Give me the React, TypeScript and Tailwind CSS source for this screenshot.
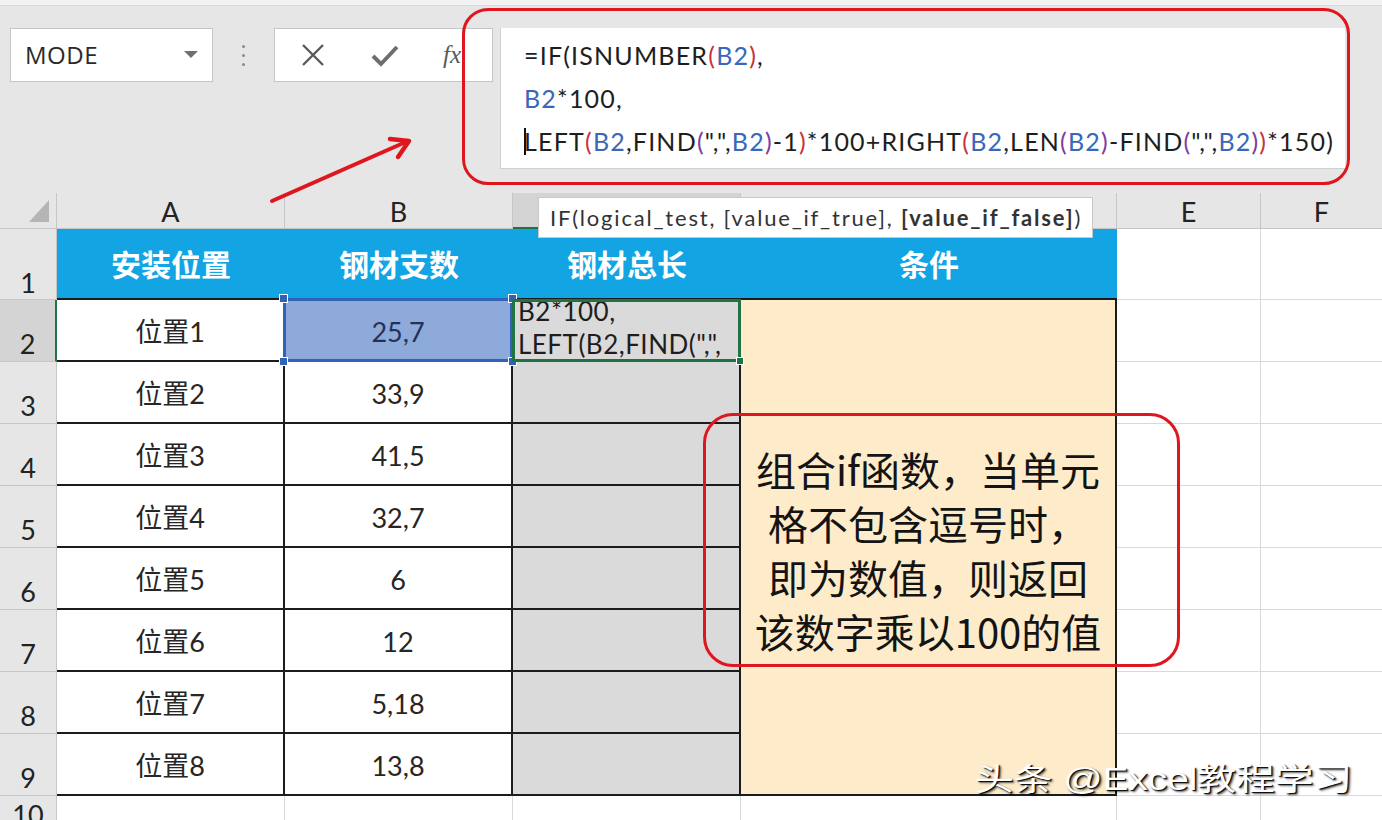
import React from "react";

type Seg = [string, string];
const K = "text-[#1e1e1e]";
const BL = "text-[#3a68b8]";
const RD = "text-[#c8323c]";
const PU = "text-[#7e3c9c]";

const line1: Seg[] = [
  ["=IF(ISNUMBER", K],
  ["(", RD],
  ["B2", BL],
  [")", RD],
  [",", K],
];
const line2: Seg[] = [
  ["B2", BL],
  ["*100,", K],
];
const line3: Seg[] = [
  ["LEFT", K],
  ["(", RD],
  ["B2", BL],
  [",FIND", K],
  ["(", PU],
  ['",",', K],
  ["B2", BL],
  [")", PU],
  ["-1", K],
  [")", RD],
  ["*100+RIGHT", K],
  ["(", RD],
  ["B2", BL],
  [",LEN", K],
  ["(", PU],
  ["B2", BL],
  [")", PU],
  ["-FIND", K],
  ["(", PU],
  ['",",', K],
  ["B2", BL],
  [")", PU],
  [")", RD],
  ["*150)", K],
];

function Line({ segs, cursor }: { segs: Seg[]; cursor?: boolean }) {
  return (
    <div className="h-[43px] leading-[43px] whitespace-pre flex items-center">
      {cursor && <span className="inline-block w-[2px] h-[27px] bg-[#111] -mr-[2px]" />}
      {segs.map((s, i) => (
        <span key={i} className={s[1]}>
          {s[0]}
        </span>
      ))}
    </div>
  );
}

const aVals = ["位置1", "位置2", "位置3", "位置4", "位置5", "位置6", "位置7", "位置8"];
const bVals = ["25,7", "33,9", "41,5", "32,7", "6", "12", "5,18", "13,8"];

const handle =
  "absolute w-[9px] h-[9px] bg-[#2f62b8] border border-white";

export default function App() {
  return (
    <div className="relative w-[1382px] h-[820px] overflow-hidden bg-[#e6e6e6] font-['Lato','Noto_Sans_CJK_SC',sans-serif]">
      {/* top strip */}
      <div className="h-[6px] bg-[#f2f2f2] border-b border-[#d8d8d8]" />
      {/* formula bar area */}
      <div className="h-[187px] flex items-start pt-[22px] pl-[10px]">
        <div className="w-[203px] h-[54px] bg-white border border-[#c6c6c6] flex items-center justify-between pl-[14px] pr-[14px]">
          <span className="text-[24px] text-[#2b2b2b] font-['Open_Sans',sans-serif] tracking-[0.5px]">MODE</span>
          <svg width="14" height="8" viewBox="0 0 14 8">
            <polygon points="0,0 14,0 7,7" fill="#707070" />
          </svg>
        </div>
        <div className="w-[61px] h-[54px] flex flex-col items-center justify-center gap-[6px]">
          <span className="w-[3px] h-[3px] rounded-full bg-[#8a8a8a]" />
          <span className="w-[3px] h-[3px] rounded-full bg-[#8a8a8a]" />
          <span className="w-[3px] h-[3px] rounded-full bg-[#8a8a8a]" />
        </div>
        <div className="w-[219px] h-[54px] bg-white border border-[#c6c6c6] flex items-center">
          <svg width="24" height="24" viewBox="0 0 24 24" className="ml-[26px]">
            <path d="M2 2 L22 22 M22 2 L2 22" stroke="#5a5a5a" strokeWidth="2.4" fill="none" />
          </svg>
          <svg width="28" height="24" viewBox="0 0 28 24" className="ml-[46px]">
            <path d="M2 13 L10 21 L26 4" stroke="#6e6e6e" strokeWidth="4" fill="none" />
          </svg>
          <span className="ml-[44px] text-[25px] italic text-[#5a5a5a] font-['Liberation_Serif',serif]">
            fx
          </span>
        </div>
        <div className="ml-[7px] w-[845px] h-[141px] bg-white border-b border-l border-[#d0d0d0] pl-[23px] pt-[6px] text-[25px] tracking-[1.2px]">
          <Line segs={line1} />
          <Line segs={line2} />
          <Line segs={line3} cursor />
        </div>
      </div>

      {/* sheet grid */}
      <div className="grid grid-cols-[57px_228px_228px_228px_376px_144px_121px] grid-rows-[36px_71px_repeat(8,62px)_36px] text-[#222]">
        {/* column headers */}
        <div className="bg-[#e6e6e6] border-r border-b border-[#c6c6c6] flex items-end justify-end pr-[7px] pb-[6px]">
          <svg width="20" height="22" viewBox="0 0 20 22">
            <polygon points="20,0 20,22 0,22" fill="#b5b5b5" />
          </svg>
        </div>
        <div className="bg-[#e6e6e6] border-r border-b border-[#c6c6c6] flex items-center justify-center pt-[4px] text-[27px]">A</div>
        <div className="bg-[#e6e6e6] border-r border-b border-[#c6c6c6] flex items-center justify-center pt-[4px] text-[27px]">B</div>
        <div className="bg-[#d4d4d4] border-r border-[#c6c6c6] border-b-2 border-b-[#217346] flex items-center justify-center pt-[4px] text-[27px]">C</div>
        <div className="bg-[#e6e6e6] border-r border-b border-[#c6c6c6] flex items-center justify-center pt-[4px] text-[27px]">D</div>
        <div className="bg-[#e6e6e6] border-r border-b border-[#c6c6c6] flex items-center justify-center pt-[4px] text-[27px]">E</div>
        <div className="bg-[#e6e6e6] border-b border-[#c6c6c6] flex items-center justify-center pt-[4px] text-[27px]">F</div>

        {/* row 1 */}
        <div className="bg-[#e6e6e6] border-r border-b border-[#c6c6c6] flex items-end justify-center pb-[3px] text-[27px] leading-none">1</div>
        <div className="bg-[#13a4e4] border-b-2 border-[#1c1c1c] flex items-center justify-center text-white font-bold text-[30px] font-['Noto_Sans_CJK_SC',sans-serif]">安装位置</div>
        <div className="bg-[#13a4e4] border-b-2 border-[#1c1c1c] flex items-center justify-center text-white font-bold text-[30px] font-['Noto_Sans_CJK_SC',sans-serif]">钢材支数</div>
        <div className="bg-[#13a4e4] border-b-2 border-[#1c1c1c] flex items-center justify-center text-white font-bold text-[30px] font-['Noto_Sans_CJK_SC',sans-serif]">钢材总长</div>
        <div className="bg-[#13a4e4] border-b-2 border-[#1c1c1c] flex items-center justify-center text-white font-bold text-[30px] font-['Noto_Sans_CJK_SC',sans-serif]">条件</div>
        <div className="bg-white border-r border-b border-[#d9d9d9]" />
        <div className="bg-white border-b border-[#d9d9d9]" />

        {aVals.map((a, i) => {
          const r = i + 2;
          const sel = r === 2;
          return (
            <React.Fragment key={r}>
              <div
                className={
                  sel
                    ? "bg-[#d4d4d4] border-r-2 border-r-[#217346] border-b border-b-[#c6c6c6] flex items-end justify-center pb-[4px] text-[27px] leading-none"
                    : "bg-[#e6e6e6] border-r border-b border-[#c6c6c6] flex items-end justify-center pb-[4px] text-[27px] leading-none"
                }
              >
                {r}
              </div>
              <div className="bg-white border-r-2 border-b-2 border-[#1c1c1c] flex items-center justify-center pt-[4px] text-[27px] text-[#262626]">
                {a}
              </div>
              {sel ? (
                <div className="relative bg-[#8eaadb] border-r-2 border-b-2 border-[#1c1c1c]">
                  <div className="absolute -left-[2px] -top-[2px] -right-[2px] -bottom-[2px] border-[3px] border-[#2f62b8] flex items-center justify-center pt-[4px] text-[27px] text-[#22325a]">
                    25,7
                  </div>
                  <div className={handle + " -left-[6px] -top-[6px]"} />
                  <div className={handle + " -right-[6px] -top-[6px]"} />
                  <div className={handle + " -left-[6px] -bottom-[6px]"} />
                  <div className={handle + " -right-[6px] -bottom-[6px]"} />
                </div>
              ) : (
                <div className="bg-white border-r-2 border-b-2 border-[#1c1c1c] flex items-center justify-center pt-[4px] text-[27px] text-[#262626]">
                  {bVals[i]}
                </div>
              )}
              {sel ? (
                <div className="relative bg-[#dadada] border-r-2 border-b-2 border-[#1c1c1c]">
                  <div className="absolute -left-[1px] -top-[1px] -right-[2px] -bottom-[2px] border-[3px] border-[#217346] overflow-hidden pl-[3px] text-[26px] tracking-[0.5px] text-[#1e1e1e] whitespace-pre">
                    <div className="-mt-[7px] leading-[33px]">B2*100,</div>
                    <div className="leading-[33px]">{'LEFT(B2,FIND(",",'}</div>
                  </div>
                  <div className="absolute -right-[5px] -bottom-[5px] w-[8px] h-[8px] bg-[#217346] border border-white" />
                </div>
              ) : (
                <div className="bg-[#dadada] border-r-2 border-b-2 border-[#1c1c1c]" />
              )}
              {sel && (
                <div className="row-span-8 bg-[#fdebc9] border-r-2 border-b-2 border-[#1c1c1c] flex flex-col items-center justify-center pt-[6px] text-[40px] leading-[54px] text-[#141414] font-['Noto_Sans_CJK_SC',sans-serif]">
                  <div>组合if函数，当单元</div>
                  <div>格不包含逗号时，</div>
                  <div>即为数值，则返回</div>
                  <div>该数字乘以100的值</div>
                </div>
              )}
              <div className="bg-white border-r border-b border-[#d9d9d9]" />
              <div className="bg-white border-b border-[#d9d9d9]" />
            </React.Fragment>
          );
        })}

        {/* row 10 */}
        <div className="bg-[#e6e6e6] border-r border-[#c6c6c6] flex items-end justify-center pb-[4px] text-[27px] leading-none">10</div>
        <div className="bg-white border-r border-[#d9d9d9]" />
        <div className="bg-white border-r border-[#d9d9d9]" />
        <div className="bg-white border-r border-[#d9d9d9]" />
        <div className="bg-white border-r border-[#d9d9d9]" />
        <div className="bg-white border-r border-[#d9d9d9]" />
        <div className="bg-white" />
      </div>

      {/* tooltip */}
      <div className="absolute left-[538px] top-[197px] w-[555px] h-[41px] bg-white border border-[#c8c8c8] flex items-center pl-[11px] text-[22px] tracking-[1.8px] text-[#333] whitespace-pre">
        <span>IF(logical_test, [value_if_true], </span>
        <span className="font-bold">[value_if_false]</span>
        <span>)</span>
      </div>

      {/* red annotation around formula */}
      <div className="absolute left-[462px] top-[8px] w-[888px] h-[177px] border-[3px] border-[#e0161e] rounded-[26px]" />

      {/* red arrow */}
      <svg className="absolute left-0 top-0" width="460" height="220" viewBox="0 0 460 220">
        <path d="M272 201 L408 141" stroke="#e0161e" strokeWidth="4" fill="none" strokeLinecap="round" />
        <path d="M390 139 L409 141 L398 157" stroke="#e0161e" strokeWidth="4.5" fill="none" strokeLinecap="round" strokeLinejoin="round" />
      </svg>

      {/* red annotation around note */}
      <div className="absolute left-[703px] top-[413px] w-[477px] h-[254px] border-[3px] border-[#e0161e] rounded-[30px]" />

      {/* watermark */}
      <div className="absolute left-[975px] top-[760px] origin-left scale-x-125 text-[31px] leading-[40px] text-white font-['Liberation_Sans','Noto_Sans_CJK_SC',sans-serif] whitespace-pre [text-shadow:1px_1px_1px_#000,2px_2px_2px_rgba(0,0,0,0.6)]">
        头条 @Excel教程学习
      </div>
    </div>
  );
}
